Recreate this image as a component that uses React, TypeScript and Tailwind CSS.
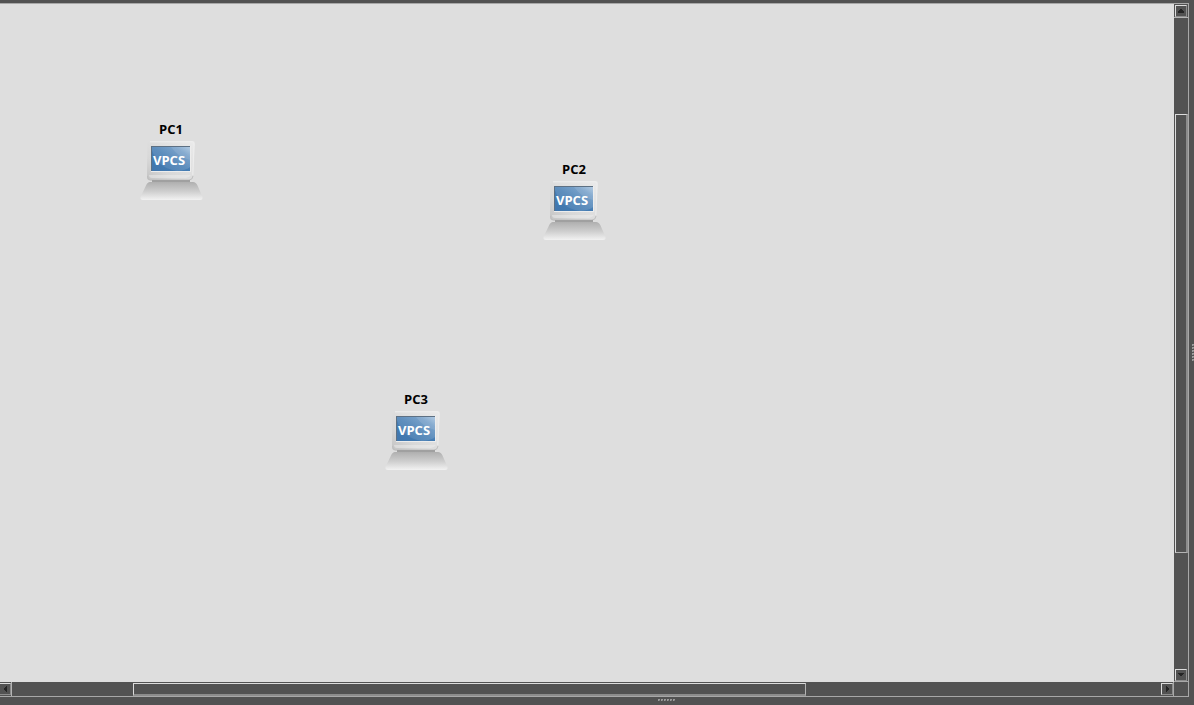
import type { ReactNode } from "react";

const nodes = [
  { name: "PC1", x: 139, y: 117 },
  { name: "PC2", x: 542, y: 157 },
  { name: "PC3", x: 384, y: 387 },
];

function Computer({ id }: { id: string }) {
  return (
    <svg viewBox="0 0 64 60" className="block h-[60px] w-16" aria-hidden="true">
      <defs>
        <linearGradient id={`${id}-case`} x1="0" y1="1" x2="1" y2="0">
          <stop offset="0" stopColor="#c2c2c2" />
          <stop offset=".3" stopColor="#d8d8d8" />
          <stop offset="1" stopColor="#ebebeb" />
        </linearGradient>
        <linearGradient id={`${id}-screen`} x1="0" y1="1" x2="1" y2="0">
          <stop offset="0" stopColor="#4076ad" />
          <stop offset=".5" stopColor="#467db3" />
          <stop offset=".8" stopColor="#5c8ebf" />
          <stop offset="1" stopColor="#8fb3d6" />
        </linearGradient>
        <linearGradient id={`${id}-shine`} x1="0" y1="1" x2="1" y2="0">
          <stop offset="0" stopColor="#fff" stopOpacity=".04" />
          <stop offset="1" stopColor="#fff" stopOpacity=".22" />
        </linearGradient>
        <linearGradient id={`${id}-base`} x1="0" y1="0" x2="0" y2="1">
          <stop offset="0" stopColor="#afafaf" />
          <stop offset=".5" stopColor="#cdcdcd" />
          <stop offset="1" stopColor="#f2f2f2" />
        </linearGradient>
      </defs>
      <path d="M11 0H53.5Q56 0 55.8 3L54.5 35Q54 39.5 50 39.5H11.5Q8 39.5 8 36L8.4 3Q8.5 0 11 0Z" fill={`url(#${id}-case)`} />
      <path d="M11 .8H53Q55 .8 55 3L53.8 34" fill="none" stroke="#eeeeee" strokeWidth="1" />
      <path d="M8.5 35Q8.5 39 11.5 39H50Q53.5 39 54 35" fill="none" stroke="#bebebe" strokeWidth="1" />
      <path d="M10 34H52Q50 37 47 37H13Q10 37 10 34Z" fill="#eeeeee" opacity=".5" />
      <path d="M12 5H52V31H12Z" fill="#ededed" />
      <path d="M12 5H51V6H13V30H12Z" fill="#5d7083" />
      <path d="M13 6H51V30H13Z" fill={`url(#${id}-screen)`} />
      <path d="M13 6H51V26Q48 29 38 30Q18 27 13 9Z" fill={`url(#${id}-shine)`} />
      <path d="M32 6H51V19Q40 17 32 6Z" fill="#fff" opacity=".1" />
      <path d="M13 39H51V41.5H13Z" fill="#a0a0a0" />
      <path d="M11 41H54Q57 41 58.5 44.5L63.5 56Q64 59 61 59H4Q1 59 1.5 56L7 44.5Q8.5 41 11 41Z" fill={`url(#${id}-base)`} />
      <text x="14" y="24" fill="#fff" fontFamily="'Open Sans', 'Noto Sans', sans-serif" fontSize="13" fontWeight="700">VPCS</text>
    </svg>
  );
}

function Arrow({ d }: { d: string }) {
  return (
    <svg viewBox="0 0 8 8" className="size-2" shapeRendering="crispEdges" aria-hidden="true">
      <path d={d} fill="#242424" />
    </svg>
  );
}

function StepButton({ label, children }: { label: string; children: ReactNode }) {
  return (
    <button
      type="button"
      aria-label={label}
      className="flex size-3 shrink-0 items-center justify-center border border-t-[#dcdcdc] border-r-[#8c8c8c] border-b-[#8c8c8c] border-l-[#dcdcdc] bg-[#525252]"
    >
      {children}
    </button>
  );
}

export default function App() {
  return (
    <div className="flex h-screen flex-col overflow-hidden bg-[#525252] font-['Open_Sans','Noto_Sans',sans-serif]">
      <div className="h-[3px] shrink-0" />
      <div className="flex min-h-0 flex-1">
        <div className="flex min-w-0 flex-1 flex-col border-t border-r border-b border-[#a8a8a8]">
          <div className="flex min-h-0 flex-1">
            <main className="relative min-w-0 flex-1 overflow-hidden bg-[#dedede]">
              {nodes.map((n) => (
                <div key={n.name} className="absolute flex w-16 flex-col items-center" style={{ left: n.x, top: n.y }}>
                  <span className="h-5 text-[13px] leading-4 font-bold text-black">{n.name}</span>
                  <Computer id={n.name} />
                </div>
              ))}
            </main>
            <div className="flex w-3.5 shrink-0 flex-col">
              <div className="flex h-3.5 border-b border-[#b4b4b4] pt-px pl-px">
                <StepButton label="Scroll up"><Arrow d="M3 2h2v1h1v1h1v2H1V4h1V3h1z" /></StepButton>
              </div>
              <div className="flex min-h-0 flex-1 flex-col">
                <div className="grow-[96] basis-0" />
                <div
                  role="scrollbar"
                  aria-label="Vertical scroll"
                  aria-controls="root"
                  aria-orientation="vertical"
                  aria-valuenow={45}
                  className="ml-px grow-[439] basis-0 border-t border-r-2 border-b border-l border-t-[#dcdcdc] border-r-[#8c8c8c] border-b-[#b4b4b4] border-l-[#dcdcdc]"
                />
                <div className="grow-[116] basis-0" />
              </div>
              <div className="flex h-3.5 border-b border-[#a8a8a8] pt-px pl-px">
                <StepButton label="Scroll down"><Arrow d="M1 2h6v1H6v1H5v1H3V4H2V3H1z" /></StepButton>
              </div>
            </div>
          </div>
          <div className="flex h-3.5 shrink-0">
            <div className="flex min-w-0 flex-1 border-r border-[#a8a8a8]">
              <div className="flex w-3 justify-end overflow-hidden border-r border-[#b4b4b4] pt-px">
                <StepButton label="Scroll left"><Arrow d="M5 1h1v6H5V6H4V5H3V3h1V2h1z" /></StepButton>
              </div>
              <div className="flex min-w-0 flex-1">
                <div className="grow-[121] basis-0" />
                <div
                  role="scrollbar"
                  aria-label="Horizontal scroll"
                  aria-controls="root"
                  aria-orientation="horizontal"
                  aria-valuenow={25}
                  className="mt-px grow-[672] basis-0 border-t border-r border-b-2 border-l border-t-[#dcdcdc] border-r-[#b4b4b4] border-b-[#8c8c8c] border-l-[#dcdcdc]"
                />
                <div className="grow-[355] basis-0" />
              </div>
              <div className="pt-px">
                <StepButton label="Scroll right"><Arrow d="M3 1h1v1h1v1h1v2H5v1H4v1H3z" /></StepButton>
              </div>
            </div>
            <div className="w-3.5 shrink-0" />
          </div>
        </div>
        <div className="flex w-[5px] shrink-0 flex-col items-end justify-center gap-px pt-1">
          {[0, 1, 2, 3, 4, 5].map((i) => (
            <span key={i} className="size-0.5 border-t border-l border-[#9c9c9c] bg-[#7c7c7c]" />
          ))}
        </div>
      </div>
      <div className="flex h-2 shrink-0 items-start justify-center gap-px pt-0.5 pl-[139px]">
        {[0, 1, 2, 3, 4, 5].map((i) => (
          <span key={i} className="size-0.5 border-t border-l border-[#9c9c9c] bg-[#7c7c7c]" />
        ))}
      </div>
    </div>
  );
}
